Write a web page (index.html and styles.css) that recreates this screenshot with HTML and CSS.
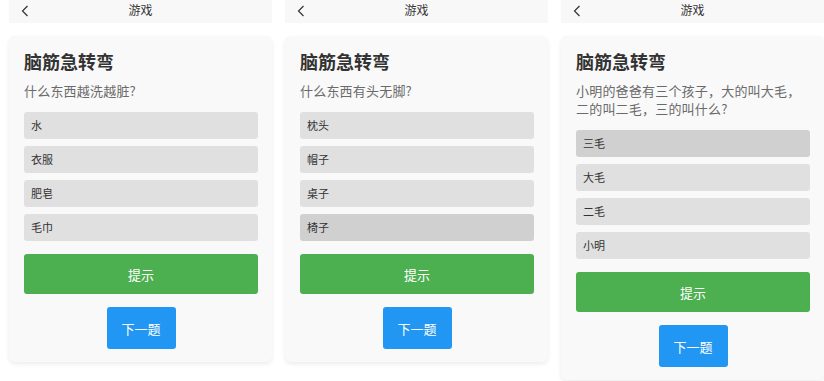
FILE: index.html
```html
<!DOCTYPE html>
<html lang="zh">
<head>
<meta charset="utf-8">
<link rel="stylesheet" href="styles.css">
</head>
<body>
<div class="row">
  <div class="phone">
    <div class="bar">
      <svg class="back" width="8" height="12" viewBox="0 0 8 12"><path d="M6.5 1 L1.5 6 L6.5 11" fill="none" stroke="#333" stroke-width="1.2"/></svg>
      <span class="bar-title">游戏</span>
    </div>
    <div class="card">
      <div class="title">脑筋急转弯</div>
      <div class="question">什么东西越洗越脏?</div>
      <div class="options">
        <div class="opt">水</div>
        <div class="opt">衣服</div>
        <div class="opt">肥皂</div>
        <div class="opt">毛巾</div>
      </div>
      <div class="hint">提示</div>
      <div class="next-wrap"><div class="next">下一题</div></div>
    </div>
  </div>
  <div class="phone">
    <div class="bar">
      <svg class="back" width="8" height="12" viewBox="0 0 8 12"><path d="M6.5 1 L1.5 6 L6.5 11" fill="none" stroke="#333" stroke-width="1.2"/></svg>
      <span class="bar-title">游戏</span>
    </div>
    <div class="card">
      <div class="title">脑筋急转弯</div>
      <div class="question">什么东西有头无脚?</div>
      <div class="options">
        <div class="opt">枕头</div>
        <div class="opt">帽子</div>
        <div class="opt">桌子</div>
        <div class="opt sel">椅子</div>
      </div>
      <div class="hint">提示</div>
      <div class="next-wrap"><div class="next">下一题</div></div>
    </div>
  </div>
  <div class="phone">
    <div class="bar">
      <svg class="back" width="8" height="12" viewBox="0 0 8 12"><path d="M6.5 1 L1.5 6 L6.5 11" fill="none" stroke="#333" stroke-width="1.2"/></svg>
      <span class="bar-title">游戏</span>
    </div>
    <div class="card">
      <div class="title">脑筋急转弯</div>
      <div class="question">小明的爸爸有三个孩子，大的叫大毛，二的叫二毛，三的叫什么?</div>
      <div class="options">
        <div class="opt sel">三毛</div>
        <div class="opt">大毛</div>
        <div class="opt">二毛</div>
        <div class="opt">小明</div>
      </div>
      <div class="hint">提示</div>
      <div class="next-wrap"><div class="next">下一题</div></div>
    </div>
  </div>
</div>
</body>
</html>
```
FILE: styles.css
```css
* { box-sizing: border-box; }
html, body { margin: 0; padding: 0; background: #fff; }
body {
  font-family: "Noto Sans CJK SC", "Noto Sans", sans-serif;
  color: #333;
  width: 824px;
  height: 381px;
  overflow: hidden;
}
.row {
  display: flex;
  gap: 13px;
  padding-left: 9px;
}
.phone {
  width: 263px;
  flex: none;
  display: flex;
  flex-direction: column;
}
.bar {
  height: 23px;
  background: #f8f8f8;
  display: flex;
  align-items: center;
  justify-content: center;
  position: relative;
}
.back {
  position: absolute;
  left: 12px;
  top: 5px;
}
.bar-title {
  font-size: 12px;
  line-height: 14px;
  color: #333;
  margin-top: -3px;
}
.card {
  margin-top: 13px;
  background: #f9f9f9;
  border-radius: 6px;
  box-shadow: 0 2px 4px rgba(0,0,0,0.08);
  padding: 15px 14px 13px 15px;
  display: flex;
  flex-direction: column;
}
.title {
  font-size: 18px;
  line-height: 21px;
  font-weight: bold;
  color: #333;
}
.question {
  margin-top: 10px;
  font-size: 13px;
  line-height: 18px;
  letter-spacing: 0.2px;
  color: #6a6a6a;
}
.options {
  margin-top: 12px;
  display: flex;
  flex-direction: column;
  gap: 7px;
}
.opt {
  height: 27px;
  background: #e0e0e0;
  border-radius: 3px;
  padding-left: 7px;
  font-size: 11px;
  line-height: 27px;
  color: #333;
}
.opt.sel { background: #d0d0d0; }
.hint {
  margin-top: 13px;
  height: 40px;
  background: #4caf50;
  border-radius: 3px;
  color: #fff;
  font-size: 13px;
  display: flex;
  align-items: center;
  justify-content: center;
}
.next-wrap {
  margin-top: 13px;
  display: flex;
  justify-content: center;
}
.next {
  width: 69px;
  height: 42px;
  background: #2196f3;
  border-radius: 3px;
  color: #fff;
  font-size: 13px;
  display: flex;
  align-items: center;
  justify-content: center;
}
```
